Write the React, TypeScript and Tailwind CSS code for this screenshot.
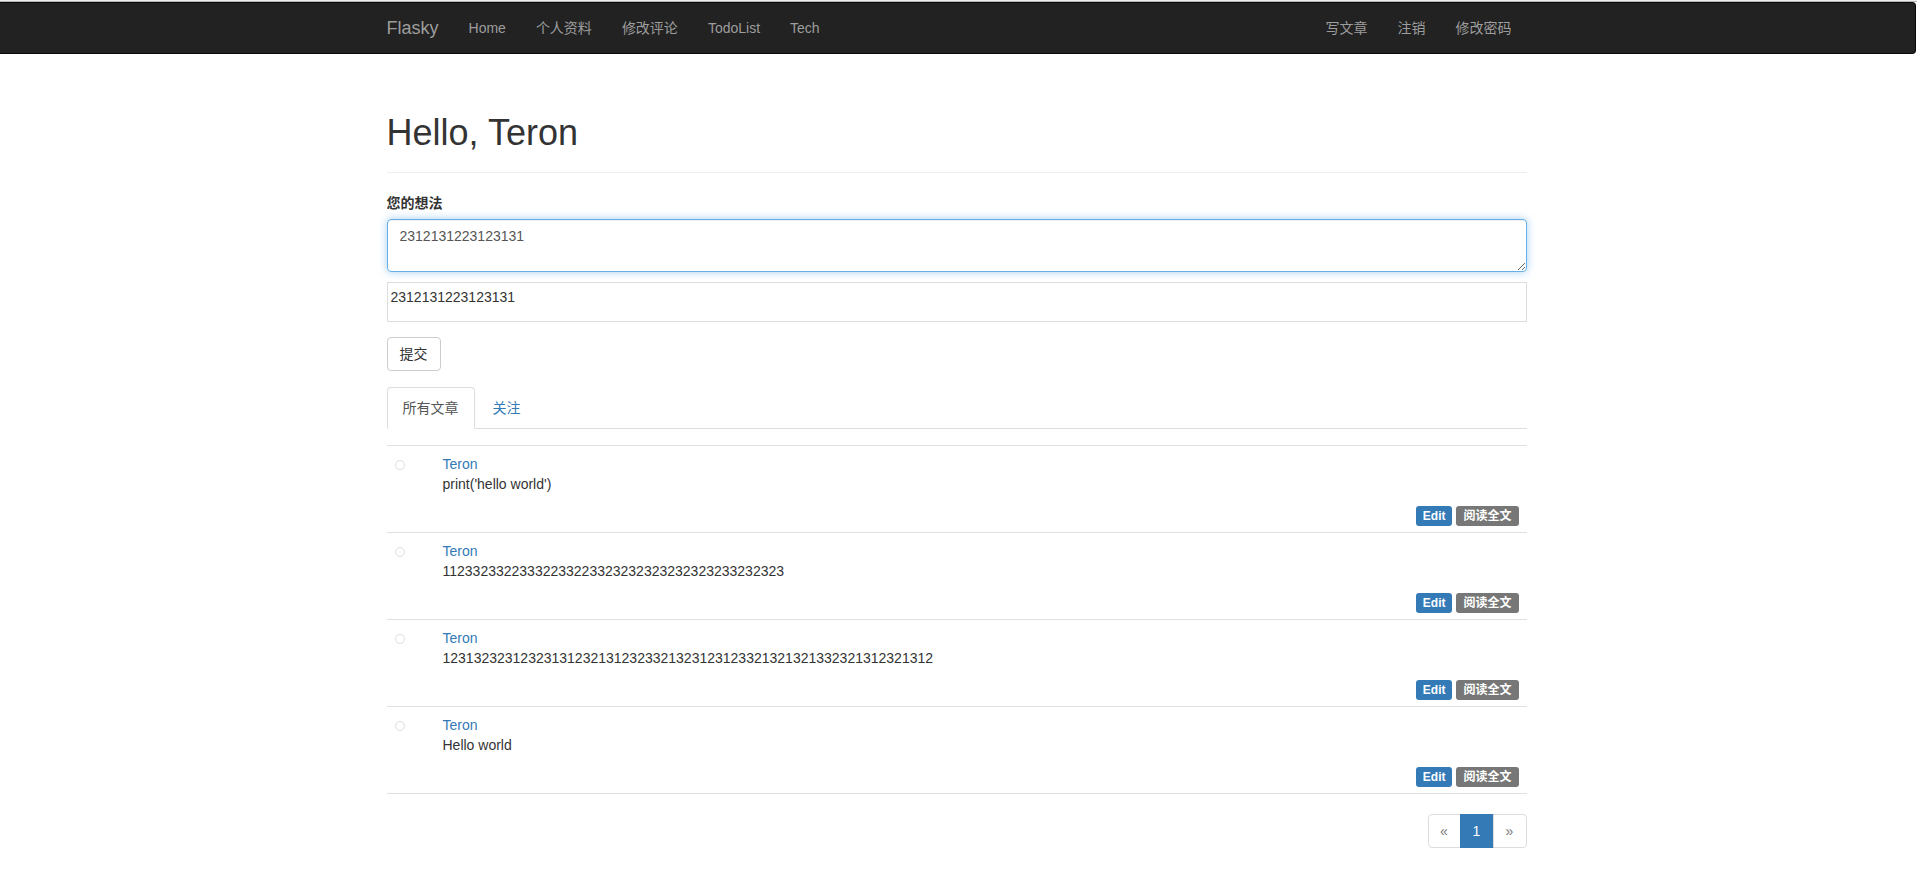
import React from "react";

const posts = [
  { author: "Teron", body: "print('hello world')" },
  { author: "Teron", body: "11233233223332233223323232323232323233232323" },
  { author: "Teron", body: "123132323123231312321312323321323123123321321321332321312321312" },
  { author: "Teron", body: "Hello world" },
];

const leftLinks = ["Home", "个人资料", "修改评论", "TodoList", "Tech"];
const rightLinks = ["写文章", "注销", "修改密码"];

export default function App() {
  return (
    <div className="min-h-screen bg-white text-[#333] text-[14px] leading-[20px] font-['Liberation_Sans','Noto_Sans_CJK_SC',sans-serif]">
      {/* browser chrome strip */}
      <div className="h-[1px] bg-[#eeeeee]" />
      <div className="h-[1px] bg-[#b8b8b8]" />

      {/* navbar */}
      <nav className="mr-[1px] h-[52px] bg-[#222] border border-l-0 border-[#080808] rounded-r-[4px]">
        <div className="flex justify-center pr-[2px]">
          <div className="w-[1140px] h-[50px] flex items-center text-[#9d9d9d]">
            <a className="pr-[15px] text-[18px] leading-[20px]">Flasky</a>
            {leftLinks.map((l) => (
              <a key={l} className="px-[15px]">
                {l}
              </a>
            ))}
            <div className="ml-auto flex">
              {rightLinks.map((l) => (
                <a key={l} className="px-[15px]">
                  {l}
                </a>
              ))}
            </div>
          </div>
        </div>
      </nav>

      <div className="flex justify-center pr-[4px]">
        <main className="w-[1140px] pt-[59px] pb-[20px]">
          {/* page header */}
          <div className="pb-[9px] border-b border-[#eee] mb-[20px]">
            <h1 className="text-[36px] leading-[39.6px] font-medium mb-[10px]">Hello, Teron</h1>
          </div>

          {/* form */}
          <label className="block font-bold mb-[6px]">您的想法</label>
          <textarea
            readOnly
            defaultValue="2312131223123131"
            className="block w-full h-[53px] px-[12px] py-[6px] border border-[#66afe9] rounded-[4px] text-[#555] outline-none shadow-[inset_0_1px_1px_rgba(0,0,0,.075),0_0_8px_rgba(102,175,233,.6)]"
          />
          <div className="mt-[10px] h-[40px] border border-[#ddd] px-[3px] py-[4px]">
            <p>2312131223123131</p>
          </div>
          <button className="mt-[15px] h-[34px] px-[12px] border border-[#ccc] rounded-[4px] bg-white text-[#333]">
            提交
          </button>

          {/* tabs */}
          <ul className="mt-[16px] flex h-[42px] border-b border-[#ddd]">
            <li className="mr-[2px] h-[42px] px-[15px] py-[10px] border border-[#ddd] border-b-transparent rounded-t-[4px] bg-white text-[#555]">
              所有文章
            </li>
            <li className="mr-[2px] h-[42px] px-[15px] py-[10px] border border-transparent text-[#337ab7]">
              关注
            </li>
          </ul>

          {/* posts */}
          <ul className="mt-[16px] border-t border-[#e0e0e0]">
            {posts.map((p, i) => (
              <li key={i} className="p-[8px] border-b border-[#e0e0e0]">
                <div className="flex">
                  <div className="w-[48px] shrink-0 pt-[6px]">
                    <div className="w-[10px] h-[10px] rounded-full border border-[#ddd]" />
                  </div>
                  <div className="min-h-[48px] min-w-0">
                    <div className="text-[#337ab7]">{p.author}</div>
                    <div>{p.body}</div>
                  </div>
                </div>
                <div className="h-[22px] flex justify-end items-start gap-[4px]">
                  <span className="mt-[4px] h-[20px] px-[7px] flex items-center rounded-[3px] bg-[#337ab7] text-white text-[12px] font-bold leading-none">
                    Edit
                  </span>
                  <span className="mt-[4px] h-[20px] px-[7px] flex items-center rounded-[3px] bg-[#777] text-white text-[12px] font-bold leading-none">
                    阅读全文
                  </span>
                </div>
              </li>
            ))}
          </ul>

          {/* pagination */}
          <div className="mt-[20px] flex justify-end">
            <div className="flex h-[34px]">
              <span className="w-[33px] flex items-center justify-center border border-[#ddd] rounded-l-[4px] text-[#777]">
                «
              </span>
              <span className="w-[34px] -ml-[1px] flex items-center justify-center border border-[#337ab7] bg-[#337ab7] text-white">
                1
              </span>
              <span className="w-[34px] -ml-[1px] flex items-center justify-center border border-[#ddd] rounded-r-[4px] text-[#777]">
                »
              </span>
            </div>
          </div>
        </main>
      </div>
    </div>
  );
}
